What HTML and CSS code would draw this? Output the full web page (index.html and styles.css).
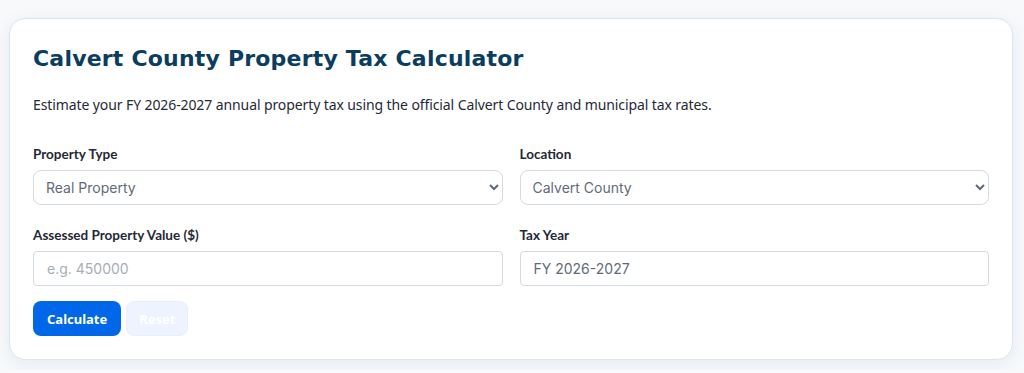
FILE: index.html
```html
<!DOCTYPE html>
<html lang="en">
<head>
    <meta charset="UTF-8">
    <meta name="viewport" content="width=device-width, initial-scale=1.0">
    <title>Calvert County Property Tax Calculator</title>
    <link rel="stylesheet" href="styles.css">
</head>
<body>
    <div class="calculator">
        <h1>Calvert County Property Tax Calculator</h1>
        <p class="intro">Estimate your FY 2026-2027 annual property tax using the official Calvert County and municipal tax rates.</p>

        <form class="tax-form">
            <div class="form-grid">
                <div class="field">
                    <label for="propertyType">Property Type</label>
                    <select id="propertyType" class="select-field">
                        <option>Real Property</option>
                        <option>Business Personal Property</option>
                    </select>
                </div>

                <div class="field">
                    <label for="location">Location</label>
                    <select id="location" class="select-field">
                        <option>Calvert County</option>
                        <option>Chesapeake Beach</option>
                        <option>North Beach</option>
                    </select>
                </div>

                <div class="field">
                    <label for="assessedValue">Assessed Property Value ($)</label>
                    <input type="number" id="assessedValue" class="input-field" placeholder="e.g. 450000">
                </div>

                <div class="field">
                    <label for="taxYear">Tax Year</label>
                    <input type="text" id="taxYear" class="input-field" value="FY 2026-2027" readonly>
                </div>
            </div>

            <div class="button-row">
                <button type="submit" class="btn btn-primary">Calculate</button>
                <button type="reset" class="btn btn-secondary">Reset</button>
            </div>
        </form>
    </div>
</body>
</html>
```

FILE: styles.css
```css
* {
    margin: 0;
    padding: 0;
    box-sizing: border-box;
}

body {
    background: #f7f9fb;
    font-family: 'Noto Sans', 'Open Sans', sans-serif;
    padding: 18px 11px 10px 9px;
}

.calculator {
    background: #ffffff;
    border: 1px solid #dbe5f1;
    border-radius: 16px;
    padding: 25px 23px 23px 23px;
    box-shadow: 0 4px 18px rgba(30, 50, 80, 0.07);
}

h1 {
    font-family: 'DejaVu Sans', 'Open Sans', sans-serif;
    font-size: 22px;
    font-weight: 700;
    color: #0b3d5e;
    line-height: 30px;
    letter-spacing: 0.2px;
    margin-bottom: 21px;
}

.intro {
    font-size: 14px;
    color: #1f2937;
    line-height: 20px;
    letter-spacing: -0.1px;
    margin-bottom: 32px;
}

.form-grid {
    display: grid;
    grid-template-columns: 1fr 1fr;
    column-gap: 17px;
    row-gap: 23px;
}

.field label {
    display: block;
    font-family: 'Lato', 'Noto Sans', sans-serif;
    font-size: 13.5px;
    font-weight: 700;
    color: #1f2937;
    line-height: 15px;
    margin-bottom: 8px;
}

.select-field,
.input-field {
    width: 100%;
    height: 35px;
    font-family: 'Inter', 'Noto Sans', sans-serif;
    font-size: 14px;
    color: #5f6b7a;
    background: #ffffff;
    border: 1px solid #d3dae4;
}

.select-field {
    border-radius: 8px;
    padding: 0 8px;
}

.input-field {
    border-radius: 4px;
    padding: 0 13px;
}

.input-field::placeholder {
    color: #a6adb6;
}

.button-row {
    display: flex;
    gap: 5px;
    margin-top: 15px;
}

.btn {
    height: 35px;
    border: none;
    border-radius: 8px;
    font-family: 'Noto Sans', sans-serif;
    font-size: 13px;
    font-weight: 700;
    cursor: pointer;
}

.btn-primary {
    background: #0068e8;
    color: #ffffff;
    padding: 0 14px;
}

.btn-secondary {
    background: #edf4ff;
    color: #ffffff;
    padding: 0 12px;
    border: 1px solid #e8f0fc;
}
```
